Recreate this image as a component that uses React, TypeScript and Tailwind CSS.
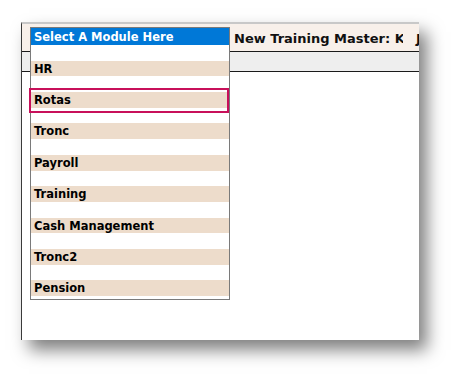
import React from 'react';

const modules = ['HR', 'Rotas', 'Tronc', 'Payroll', 'Training', 'Cash Management', 'Tronc2', 'Pension'];

const font = { fontFamily: '"DejaVu Sans", Verdana, sans-serif' };

function ModuleMenu() {
  return (
    <div
      className="absolute left-[8px] top-[3px] w-[200px] h-[273px] border border-[#7a7a7a] bg-white"
      style={font}
    >
      <div className="h-[17px] bg-[#0078d7] pl-[3px] text-[11.5px] font-bold leading-[18px] text-white">
        Select A Module Here
      </div>
      {modules.map((m) => (
        <div key={m} className="relative">
          <div className="h-[15.7px]" />
          <div className="h-[15.7px] bg-[#eddccb] pl-[3px] text-[11.5px] font-bold leading-[17px] text-black">{m}</div>
          {m === 'Rotas' && (
            <div className="absolute left-[-2px] top-[12px] h-[25px] w-[200px] border-[2.7px] border-[#c8105a]" />
          )}
        </div>
      ))}
    </div>
  );
}

export default function App() {
  return (
    <div className="h-[383px] w-[461px] overflow-hidden bg-white pl-[21px] pt-[22px]">
      <div className="relative h-[318px] w-[398px] border-l border-t-2 border-l-[#3a3a3a] border-t-[#c8c8c8] bg-white shadow-[8px_10px_16px_rgba(0,0,0,0.5)]">
        <div className="flex h-[28px] items-center overflow-hidden border-b border-[#1a1a1a] bg-[#f8f0ea] pt-[2px]" style={font}>
          <span className="ml-[212px] w-[169px] shrink-0 overflow-hidden whitespace-nowrap text-[13px] font-bold text-[#111]">
            New Training Master: K
          </span>
          <span className="ml-[13px] shrink-0 text-[13px] font-bold text-[#111]">J</span>
        </div>
        <div className="h-[20px] border-b border-[#1a1a1a] bg-[#eeeeee]" />
        <ModuleMenu />
      </div>
    </div>
  );
}
